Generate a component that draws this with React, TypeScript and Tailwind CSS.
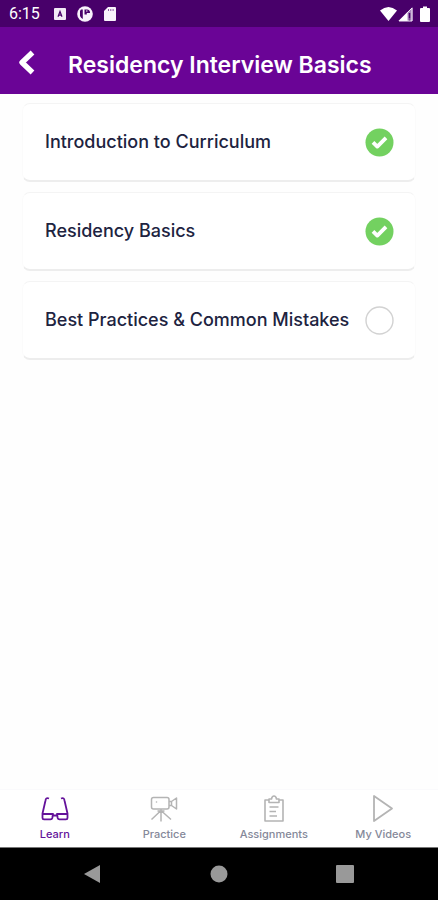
const lessons = [
  { title: "Introduction to Curriculum", done: true },
  { title: "Residency Basics", done: true },
  { title: "Best Practices & Common Mistakes", done: false },
];

function StatusBar() {
  return (
    <div className="flex h-[27px] items-center justify-between bg-[#48006a] pr-2 pl-[9px] text-white">
      <div className="flex items-center">
        <span className="w-[45px] font-[Roboto,sans-serif] text-base leading-5">6:15</span>
        <svg className="mr-[11px] h-3 w-3" viewBox="0 0 12 12" aria-hidden="true">
          <rect width="12" height="12" rx="1" fill="#f3eaf7" />
          <path d="M4 8.800 6 3.500l2 5.300M4.700 7.200h2.600" fill="none" stroke="#48006a" strokeWidth="1.200" />
        </svg>
        <svg className="mr-[11px] h-4 w-4" viewBox="0 0 16 16" aria-hidden="true">
          <circle cx="8" cy="8" r="7.800" fill="#f8f2fb" />
          <path d="M4 3.500h1.800v9.500A5.500 5.500 0 0 1 3 10V5zM7.500 3.500H10A3 3 0 0 1 13 7H9.800v1.500H7.500z" fill="#48006a" />
          <path d="M9 5h1.500" stroke="#f8f2fb" strokeWidth="1" />
        </svg>
        <svg className="h-4 w-3" viewBox="0 0 12 16" aria-hidden="true">
          <path d="M4 1h7a1 1 0 0 1 1 1v12a1 1 0 0 1-1 1H1a1 1 0 0 1-1-1V5z" fill="#f8f2fb" />
          <path d="M4.500 3v2M6.800 3v2M9.100 3v2" stroke="#8a5aa3" strokeWidth="1" />
        </svg>
      </div>
      <div className="flex items-center">
        <svg className="h-4 w-[17px]" viewBox="0 0 17 16" aria-hidden="true">
          <path d="M0 4.500Q8.500-2.500 17 4.500L8.500 15z" fill="#fff" />
        </svg>
        <svg className="mr-[7px] ml-px h-4 w-[15px]" viewBox="0 0 15 16" aria-hidden="true">
          <path d="M14.500 1v14H.5z" fill="#a988bd" />
          <path d="M9.500 6v9h-9z" fill="#fff" />
          <path d="M11.500 7v5.500M11.500 13.500V15" stroke="#48006a" strokeWidth="1.500" />
          <path d="M1 15 14 2v13z" fill="none" stroke="#f3eaf7" strokeWidth="1" />
        </svg>
        <svg className="h-4 w-[10px]" viewBox="0 0 10 16" aria-hidden="true">
          <path d="M3 .5h4V2h2a1 1 0 0 1 1 1v12a1 1 0 0 1-1 1H1a1 1 0 0 1-1-1V3a1 1 0 0 1 1-1h2z" fill="#fff" />
        </svg>
      </div>
    </div>
  );
}

function Header() {
  return (
    <header className="flex h-[67px] items-center bg-[#6a0496] pt-1 pl-[17px] text-white">
      <button type="button" aria-label="Back" className="mr-[31px] flex h-10 w-5 items-center justify-center">
        <svg className="h-[26px] w-5" viewBox="0 0 20 26" fill="none" stroke="currentColor" strokeWidth="5.400" strokeLinejoin="round" aria-hidden="true">
          <path d="M15.500 2.500 5 12.500l10.500 10" />
        </svg>
      </button>
      <h1 className="pt-1 text-[23px] leading-8 font-semibold whitespace-nowrap">Residency Interview Basics</h1>
    </header>
  );
}

function Status({ done }: { done: boolean }) {
  return (
    <svg className="h-[29px] w-[29px] shrink-0" viewBox="0 0 29 29" role="img" aria-label={done ? "Completed" : "Not completed"}>
      {done ? (
        <>
          <circle cx="14.500" cy="14.500" r="14" fill="#73d160" />
          <path d="m8 14.300 4.300 4.300 8.700-8.700" fill="none" stroke="#fff" strokeWidth="3.800" strokeLinejoin="round" />
        </>
      ) : (
        <circle cx="14.500" cy="14.500" r="13.500" fill="#fff" stroke="#d2d2d2" strokeWidth="1.400" />
      )}
    </svg>
  );
}

function GlassesIcon() {
  return (
    <svg className="h-7 w-7" viewBox="0 0 28 28" fill="none" stroke="currentColor" strokeWidth="1.800" strokeLinejoin="round" aria-hidden="true">
      <path d="M8 4.500C5.500 3.500 4.800 4.500 4.500 6.500L1.500 19.500v4.500q0 1.300 1.500 1.300h6.500q1.500 0 1.800-1.300l.7-4H1.500M20 4.500c2.500-1 3.200 0 3.500 2l3 13v4.500q0 1.300-1.500 1.300h-6.500q-1.500 0-1.800-1.300l-.7-4h10.500M11.500 21.500h5" />
    </svg>
  );
}

function CameraIcon() {
  return (
    <svg className="h-7 w-7" viewBox="0 0 28 28" fill="none" stroke="currentColor" strokeWidth="1.500" strokeLinejoin="round" aria-hidden="true">
      <rect x="1.500" y="3.500" width="17.500" height="11.500" rx="2" />
      <path d="M19 7.500h2.500v4H19M21.500 7.500 26.500 4v11l-5-3.500M11 15v12.500M10.500 17 1.500 25.500M11.500 17l9.500 8.500M7.500 17h7" />
      <circle cx="6.500" cy="8" r=".8" fill="currentColor" stroke="none" />
    </svg>
  );
}

function ClipboardIcon() {
  return (
    <svg className="h-7 w-7" viewBox="0 0 28 28" fill="none" stroke="currentColor" strokeWidth="1.600" strokeLinejoin="round" aria-hidden="true">
      <path d="M9 6H5v21h18V6h-4" />
      <path d="M9 8.500V5h2.500Q12 2 14 2t2.500 3H19v3.500zM9.500 13h9M9.500 17.500h6.500M9.500 22h7.500" />
    </svg>
  );
}

function PlayIcon() {
  return (
    <svg className="h-7 w-7" viewBox="0 0 28 28" fill="none" stroke="currentColor" strokeWidth="1.800" strokeLinejoin="round" aria-hidden="true">
      <path d="M5 2v25l18-12.500z" />
    </svg>
  );
}

const tabs = [
  { label: "Learn", Icon: GlassesIcon, active: true },
  { label: "Practice", Icon: CameraIcon, active: false },
  { label: "Assignments", Icon: ClipboardIcon, active: false },
  { label: "My Videos", Icon: PlayIcon, active: false },
];

function TabBar() {
  return (
    <nav className="grid h-[58px] grid-cols-4 border-t border-[#fafafc] bg-white">
      {tabs.map(({ label, Icon, active }) => (
        <a key={label} href="#" aria-current={active ? "page" : undefined} className={active ? "flex flex-col items-center pt-1 text-[#64129a]" : "flex flex-col items-center pt-1 text-[#b4b4b4]"}>
          <Icon />
          <span className={active ? "mt-1 text-[11px] leading-4 font-medium" : "mt-1 text-[11px] leading-4 font-medium text-[#858899]"}>{label}</span>
        </a>
      ))}
    </nav>
  );
}

function SystemNav() {
  return (
    <div className="flex h-[53px] items-center justify-center gap-[108px] border-t border-[#777] bg-black text-[#999]">
      <button type="button" aria-label="System back">
        <svg className="h-[18px] w-[18px]" viewBox="0 0 18 18" fill="currentColor" aria-hidden="true"><path d="M16 0v18L0 9z" /></svg>
      </button>
      <button type="button" aria-label="Home">
        <svg className="h-[18px] w-[18px]" viewBox="0 0 18 18" fill="currentColor" aria-hidden="true"><circle cx="9" cy="9" r="8.500" /></svg>
      </button>
      <button type="button" aria-label="Recent apps">
        <svg className="h-[18px] w-[18px]" viewBox="0 0 18 18" fill="currentColor" aria-hidden="true"><rect width="18" height="18" rx="1" /></svg>
      </button>
    </div>
  );
}

export default function App() {
  return (
    <div className="flex min-h-screen flex-col bg-[#fefefe] font-[Inter,sans-serif]">
      <StatusBar />
      <Header />
      <main className="flex-1 px-[22px] pt-[9px]">
        <ul className="flex flex-col gap-[10px]">
          {lessons.map((lesson) => (
            <li key={lesson.title}>
              <button type="button" className="flex h-[79px] w-full items-center justify-between rounded-lg border-x border-t border-b-2 border-x-[#fbfbfb] border-t-[#f4f4f4] border-b-[#ededed] bg-white px-[21px] text-left">
                <span className="pl-px text-lg leading-6 font-medium whitespace-nowrap text-[#20233f]">{lesson.title}</span>
                <Status done={lesson.done} />
              </button>
            </li>
          ))}
        </ul>
      </main>
      <TabBar />
      <SystemNav />
    </div>
  );
}
